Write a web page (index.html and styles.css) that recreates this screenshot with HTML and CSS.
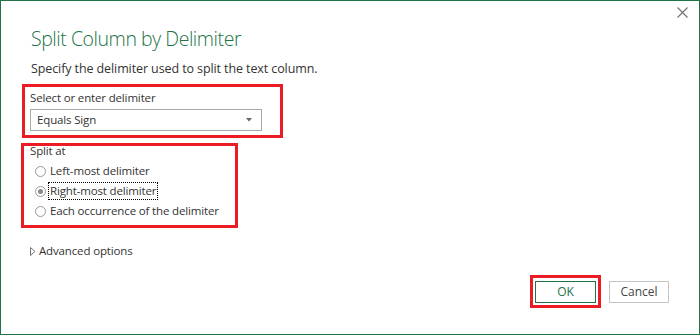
FILE: index.html
```html
<!DOCTYPE html>
<html>
<head>
<meta charset="utf-8">
<link rel="stylesheet" href="styles.css">
</head>
<body>
<div class="dialog">
  <button class="close" aria-label="Close">
    <svg width="11" height="11" viewBox="0 0 11 11"><path d="M0.5 0.5 L10.5 10.5 M10.5 0.5 L0.5 10.5" stroke="#777" stroke-width="1.3" fill="none"/></svg>
  </button>
  <h1 class="title">Split Column by Delimiter</h1>
  <p class="subtitle">Specify the delimiter used to split the text column.</p>

  <div class="mark mark-delim">
    <div class="label">Select or enter delimiter</div>
    <div class="select">
      <span>Equals Sign</span>
      <svg class="caret" width="6" height="4" viewBox="0 0 6 4"><path d="M0 0 H6 L3 3.5 Z" fill="#666"/></svg>
    </div>
  </div>

  <div class="mark mark-split">
    <div class="label split-label">Split at</div>
    <div class="radio"><span class="dot"></span><span>Left-most delimiter</span></div>
    <div class="radio"><span class="dot checked"></span><span class="focus">Right-most delimiter</span></div>
    <div class="radio"><span class="dot"></span><span>Each occurrence of the delimiter</span></div>
  </div>

  <div class="advanced">
    <svg width="6" height="9" viewBox="0 0 6 9"><path d="M0.5 0.5 L5 4.5 L0.5 8.5 Z" fill="none" stroke="#777" stroke-width="1"/></svg>
    <span>Advanced options</span>
  </div>

  <div class="actions">
    <div class="mark mark-ok"><button class="btn btn-ok">OK</button></div>
    <button class="btn btn-cancel">Cancel</button>
  </div>
</div>
</body>
</html>
```
FILE: styles.css
```css
* { box-sizing: border-box; }
html, body { margin: 0; padding: 0; background: #fff; }
body {
  font-family: "Open Sans", "Segoe UI", sans-serif;
  color: #333;
  font-size: 11.5px;
  letter-spacing: -0.15px;
}

.dialog {
  position: relative;
  width: 700px;
  height: 335px;
  border: 1px solid #217346;
  padding: 0 30px 26px 29px;
  display: flex;
  flex-direction: column;
  align-items: flex-start;
}

.close {
  position: absolute;
  top: 6px;
  right: 11px;
  width: 11px;
  height: 11px;
  padding: 0;
  border: 0;
  background: none;
  display: flex;
}

.title {
  margin: 24px 0 0 1px;
  font-size: 19.5px;
  letter-spacing: -0.45px;
  line-height: 28px;
  font-weight: 300;
  color: #217346;
}

.subtitle {
  margin: 7px 0 0 1px;
  font-size: 12.5px;
  letter-spacing: -0.1px;
  line-height: 18px;
  color: #333;
}

.mark { border: 3px solid #ec1c24; }

.mark-delim {
  margin: 6px 0 0 -8px;
  width: 261px;
  padding: 3px 0 4px 5px;
}

.label { line-height: 16px; }

.select {
  margin-top: 3px;
  width: 232px;
  height: 22px;
  border: 1px solid #ababab;
  padding: 0 9px 0 6px;
  line-height: 20px;
  display: flex;
  align-items: center;
  justify-content: space-between;
}

.mark-split {
  margin: 5px 0 0 -9px;
  width: 217px;
  padding: 0 0 4px 6px;
}

.split-label { line-height: 10px; margin-bottom: 5px; }

.radio {
  height: 20px;
  line-height: 20px;
  display: flex;
  align-items: center;
  gap: 4px;
  margin-left: 5px;
}

.dot {
  width: 11px;
  height: 11px;
  border: 1px solid #9a9a9a;
  border-radius: 50%;
  background: #fff;
  display: flex;
  align-items: center;
  justify-content: center;
}

.dot.checked::after {
  content: "";
  width: 5px;
  height: 5px;
  border-radius: 50%;
  background: #8a8a8a;
}

.focus {
  outline: 1px dotted #000;
  line-height: 16px;
  padding: 0 1px;
  margin-left: -1px;
}

.advanced {
  margin-top: 13px;
  display: flex;
  align-items: center;
  gap: 3px;
  line-height: 20px;
}

.actions {
  margin-top: auto;
  align-self: flex-end;
  display: flex;
  align-items: flex-start;
  gap: 8px;
}

.mark-ok { padding: 3px 2px 2px; }

.btn {
  font-family: inherit;
  font-size: 12px;
  letter-spacing: 0;
  height: 22px;
  padding: 0;
  background: #fff;
  line-height: 20px;
}

.btn-ok {
  width: 61px;
  border: 1px solid #217346;
  color: #217346;
}

.btn-cancel {
  margin-top: 6px;
  width: 60px;
  border: 1px solid #c6c6c6;
  color: #444;
}
```
